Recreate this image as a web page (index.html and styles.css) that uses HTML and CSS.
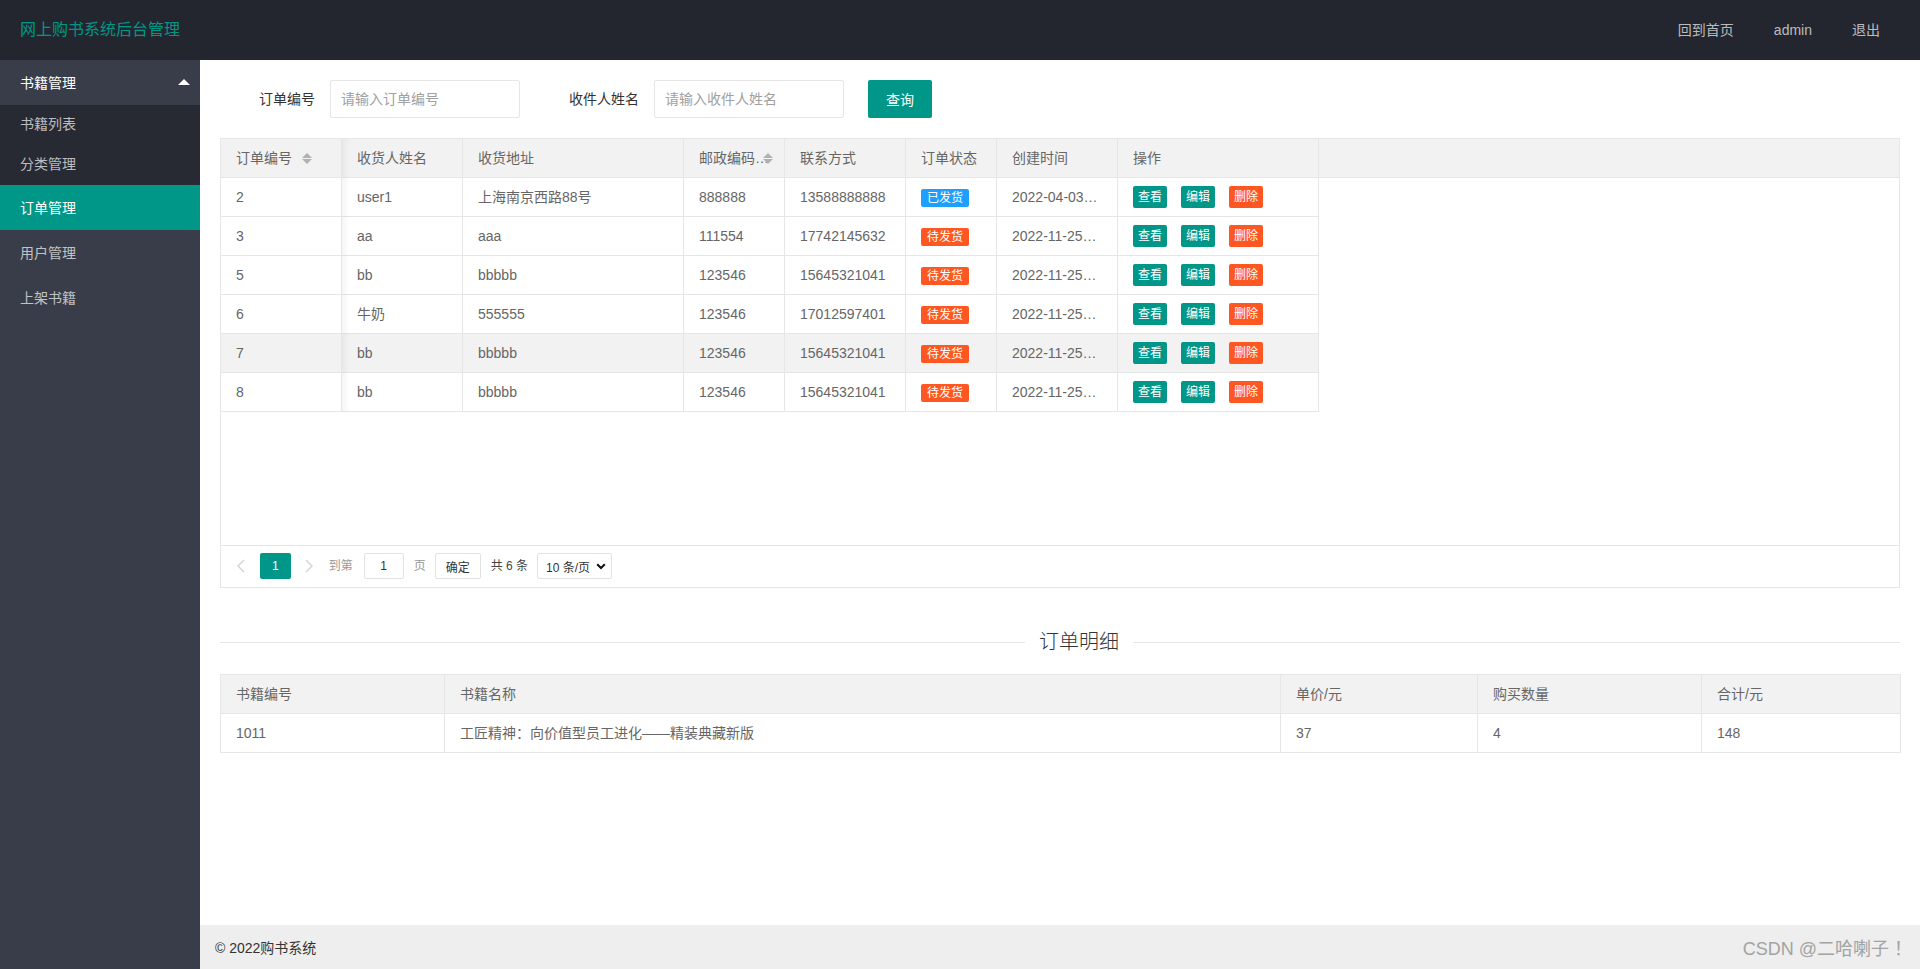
FILE: index.html
```html
<!DOCTYPE html>
<html lang="zh-CN">
<head>
<meta charset="utf-8">
<title>网上购书系统后台管理</title>
<link rel="stylesheet" href="styles.css">
</head>
<body>
<div class="layout">
  <header class="header">
    <div class="logo">网上购书系统后台管理</div>
    <nav class="topnav">
      <a class="topnav-item">回到首页</a>
      <a class="topnav-item">admin</a>
      <a class="topnav-item">退出</a>
    </nav>
  </header>
  <div class="frame">
    <aside class="side">
      <ul class="side-nav">
        <li>
          <a class="side-link side-link-open">书籍管理<span class="caret-up"></span></a>
          <ul class="side-child">
            <li><a class="side-sub">书籍列表</a></li>
            <li><a class="side-sub">分类管理</a></li>
          </ul>
        </li>
        <li><a class="side-link side-link-active">订单管理</a></li>
        <li><a class="side-link">用户管理</a></li>
        <li><a class="side-link">上架书籍</a></li>
      </ul>
    </aside>
    <div class="body">
      <main class="content">
        <form class="search">
          <label class="search-label">订单编号</label>
          <input class="search-input" type="text" placeholder="请输入订单编号">
          <label class="search-label">收件人姓名</label>
          <input class="search-input" type="text" placeholder="请输入收件人姓名">
          <button class="btn" type="button">查询</button>
        </form>

        <div class="tview">
          <div class="tview-main">
            <div class="tview-head">
              <table class="grid">
                <thead>
                  <tr>
                    <th class="col-fixed"><div class="cell w-id">订单编号<i class="sort"></i></div></th>
                    <th><div class="cell w-name">收货人姓名</div></th>
                    <th><div class="cell w-addr">收货地址</div></th>
                    <th><div class="cell w-zip">邮政编码<span class="dots">..</span><i class="sort sort-tight"></i></div></th>
                    <th><div class="cell w-tel">联系方式</div></th>
                    <th><div class="cell w-state">订单状态</div></th>
                    <th><div class="cell w-time">创建时间</div></th>
                    <th><div class="cell w-op">操作</div></th>
                  </tr>
                </thead>
              </table>
            </div>
            <table class="grid grid-body">
              <tbody>
                <tr>
                  <td class="col-fixed"><div class="cell w-id">2</div></td>
                  <td><div class="cell w-name">user1</div></td>
                  <td><div class="cell w-addr">上海南京西路88号</div></td>
                  <td><div class="cell w-zip">888888</div></td>
                  <td><div class="cell w-tel">13588888888</div></td>
                  <td><div class="cell w-state"><span class="badge badge-blue">已发货</span></div></td>
                  <td><div class="cell w-time">2022-04-03…</div></td>
                  <td><div class="cell w-op ops"><a class="btn-xs">查看</a><a class="btn-xs">编辑</a><a class="btn-xs btn-danger">删除</a></div></td>
                </tr>
                <tr>
                  <td class="col-fixed"><div class="cell w-id">3</div></td>
                  <td><div class="cell w-name">aa</div></td>
                  <td><div class="cell w-addr">aaa</div></td>
                  <td><div class="cell w-zip">111554</div></td>
                  <td><div class="cell w-tel">17742145632</div></td>
                  <td><div class="cell w-state"><span class="badge badge-orange">待发货</span></div></td>
                  <td><div class="cell w-time">2022-11-25…</div></td>
                  <td><div class="cell w-op ops"><a class="btn-xs">查看</a><a class="btn-xs">编辑</a><a class="btn-xs btn-danger">删除</a></div></td>
                </tr>
                <tr>
                  <td class="col-fixed"><div class="cell w-id">5</div></td>
                  <td><div class="cell w-name">bb</div></td>
                  <td><div class="cell w-addr">bbbbb</div></td>
                  <td><div class="cell w-zip">123546</div></td>
                  <td><div class="cell w-tel">15645321041</div></td>
                  <td><div class="cell w-state"><span class="badge badge-orange">待发货</span></div></td>
                  <td><div class="cell w-time">2022-11-25…</div></td>
                  <td><div class="cell w-op ops"><a class="btn-xs">查看</a><a class="btn-xs">编辑</a><a class="btn-xs btn-danger">删除</a></div></td>
                </tr>
                <tr>
                  <td class="col-fixed"><div class="cell w-id">6</div></td>
                  <td><div class="cell w-name">牛奶</div></td>
                  <td><div class="cell w-addr">555555</div></td>
                  <td><div class="cell w-zip">123546</div></td>
                  <td><div class="cell w-tel">17012597401</div></td>
                  <td><div class="cell w-state"><span class="badge badge-orange">待发货</span></div></td>
                  <td><div class="cell w-time">2022-11-25…</div></td>
                  <td><div class="cell w-op ops"><a class="btn-xs">查看</a><a class="btn-xs">编辑</a><a class="btn-xs btn-danger">删除</a></div></td>
                </tr>
                <tr class="is-hover">
                  <td class="col-fixed"><div class="cell w-id">7</div></td>
                  <td><div class="cell w-name">bb</div></td>
                  <td><div class="cell w-addr">bbbbb</div></td>
                  <td><div class="cell w-zip">123546</div></td>
                  <td><div class="cell w-tel">15645321041</div></td>
                  <td><div class="cell w-state"><span class="badge badge-orange">待发货</span></div></td>
                  <td><div class="cell w-time">2022-11-25…</div></td>
                  <td><div class="cell w-op ops"><a class="btn-xs">查看</a><a class="btn-xs">编辑</a><a class="btn-xs btn-danger">删除</a></div></td>
                </tr>
                <tr>
                  <td class="col-fixed"><div class="cell w-id">8</div></td>
                  <td><div class="cell w-name">bb</div></td>
                  <td><div class="cell w-addr">bbbbb</div></td>
                  <td><div class="cell w-zip">123546</div></td>
                  <td><div class="cell w-tel">15645321041</div></td>
                  <td><div class="cell w-state"><span class="badge badge-orange">待发货</span></div></td>
                  <td><div class="cell w-time">2022-11-25…</div></td>
                  <td><div class="cell w-op ops"><a class="btn-xs">查看</a><a class="btn-xs">编辑</a><a class="btn-xs btn-danger">删除</a></div></td>
                </tr>
              </tbody>
            </table>
          </div>
          <div class="tview-page">
            <span class="pg-arrow"><svg width="8" height="14" viewBox="0 0 8 14"><path d="M7 1 L1 7 L7 13" fill="none" stroke="#d2d2d2" stroke-width="1.4"/></svg></span>
            <span class="pg-curr">1</span>
            <span class="pg-arrow pg-next"><svg width="8" height="14" viewBox="0 0 8 14"><path d="M1 1 L7 7 L1 13" fill="none" stroke="#d2d2d2" stroke-width="1.4"/></svg></span>
            <span class="pg-skip">到第</span>
            <input class="pg-input" type="text" value="1">
            <span class="pg-unit">页</span>
            <button class="pg-btn" type="button">确定</button>
            <span class="pg-count">共 6 条</span>
            <span class="pg-limits"><span>10 条/页</span><svg width="10" height="7" viewBox="0 0 10 7"><path d="M1.2 1.2 L5 5 L8.8 1.2" fill="none" stroke="#111" stroke-width="2"/></svg></span>
          </div>
        </div>

        <div class="field-title">
          <span class="field-line field-line-left"></span>
          <span class="field-text">订单明细</span>
          <span class="field-line"></span>
        </div>

        <table class="dtable">
          <colgroup>
            <col class="dc-1"><col class="dc-2"><col class="dc-3"><col class="dc-4"><col class="dc-5">
          </colgroup>
          <thead>
            <tr><th>书籍编号</th><th>书籍名称</th><th>单价/元</th><th>购买数量</th><th>合计/元</th></tr>
          </thead>
          <tbody>
            <tr><td>1011</td><td>工匠精神：向价值型员工进化——精装典藏新版</td><td>37</td><td>4</td><td>148</td></tr>
          </tbody>
        </table>
      </main>
      <footer class="footer">
        <span>© 2022购书系统</span>
        <span class="watermark">CSDN @二哈喇子 ！</span>
      </footer>
    </div>
  </div>
</div>
</body>
</html>
```

FILE: styles.css
```css
* { box-sizing: border-box; }
html, body { margin: 0; height: 100%; overflow: hidden; }
body {
  font-family: "Liberation Sans", "Noto Sans CJK SC", sans-serif;
  font-size: 14px;
  color: #333;
  background: #fff;
}
ul { list-style: none; margin: 0; padding: 0; }
a { text-decoration: none; color: inherit; }

.layout { height: 100vh; display: flex; flex-direction: column; }

/* header */
.header {
  height: 60px; flex: none; background: #23262e;
  display: flex; align-items: center; justify-content: space-between;
}
.logo { width: 200px; text-align: center; color: #009688; font-size: 16px; line-height: 60px; }
.topnav { display: flex; padding: 0 20px; }
.topnav-item { padding: 0 20px; line-height: 60px; color: rgba(255,255,255,.7); }

/* frame */
.frame { flex: 1; display: flex; min-height: 0; }
.side { width: 200px; flex: none; background: #393d49; }
.side-link {
  display: flex; align-items: center; justify-content: space-between;
  height: 45px; padding: 0 10px 1px 20px; color: rgba(255,255,255,.7);
}
.side-link-open { color: #fff; }
.side-link-active { background: #009688; color: #fff; }
.caret-up {
  width: 0; height: 0;
  border-left: 6px solid transparent; border-right: 6px solid transparent;
  border-bottom: 6px solid #fff;
}
.side-child { background: rgba(0,0,0,.3); }
.side-sub { display: block; height: 40px; line-height: 39px; padding-left: 20px; color: rgba(255,255,255,.7); }

.body { flex: 1; display: flex; flex-direction: column; min-width: 0; }
.content { flex: 1; padding: 20px 20px 0; overflow: hidden; }

/* search */
.search { display: flex; align-items: center; margin: 0 0 20px; }
.search-label { width: 110px; padding: 0 15px; text-align: right; color: #333; line-height: 20px; }
.search-input {
  width: 190px; height: 38px; border: 1px solid #e6e6e6; border-radius: 2px;
  padding: 0 10px; font: inherit; color: #333; margin: 0 24px 0 0; outline: none; background: #fff;
}
.search-input::placeholder { color: #a0a0a0; }
.btn {
  height: 38px; padding: 0 18px; border: 0; border-radius: 2px;
  background: #009688; color: #fff; font: inherit; cursor: pointer;
}

/* table view */
.tview { height: 450px; border: 1px solid #e6e6e6; display: flex; flex-direction: column; }
.tview-main { flex: 1; }
.tview-head { background: #f2f2f2; border-bottom: 1px solid #e6e6e6; }
.grid { border-collapse: separate; border-spacing: 0; color: #666; }
.grid th, .grid td { padding: 0; border-right: 1px solid #e6e6e6; font-weight: 400; text-align: left; }
.grid-body td { border-bottom: 1px solid #e6e6e6; background: #fff; }
.grid-body tr.is-hover td { background: #f2f2f2; }
.grid .col-fixed { position: relative; }
.grid .col-fixed::after {
  content: ""; position: absolute; top: 0; bottom: -1px; right: -9px; width: 8px;
  background: linear-gradient(to right, rgba(0,0,0,.04), rgba(0,0,0,0));
  pointer-events: none;
}
.cell {
  height: 38px; line-height: 38px; padding: 0 15px;
  overflow: hidden; white-space: nowrap; text-overflow: ellipsis;
}
.w-id { width: 120px; }
.w-name { width: 120px; }
.w-addr { width: 220px; }
.w-zip { width: 100px; }
.w-tel { width: 120px; }
.w-state { width: 90px; }
.w-time { width: 120px; }
.w-op { width: 200px; }
.dots { letter-spacing: -1px; }

.sort { display: inline-block; position: relative; width: 10px; height: 20px; margin-left: 10px; vertical-align: middle; }
.sort-tight { margin-left: 2px; }
.sort::before, .sort::after {
  content: ""; position: absolute; left: 0; width: 0; height: 0;
  border: 5px solid transparent;
}
.sort::before { top: -1px; border-bottom-color: #b2b2b2; }
.sort::after { top: 10px; border-top-color: #b2b2b2; }

.badge {
  display: inline-block; height: 18px; line-height: 18px; padding: 0 6px;
  border-radius: 2px; color: #fff; font-size: 12px; vertical-align: middle;
}
.badge-blue { background: #1e9fff; }
.badge-orange { background: #ff5722; }

.ops { display: flex; align-items: center; gap: 14px; }
.btn-xs {
  display: inline-block; height: 22px; line-height: 22px; padding: 0 5px;
  border-radius: 2px; background: #009688; color: #fff; font-size: 12px;
}
.btn-danger { background: #ff5722; }

/* pager */
.tview-page {
  height: 42px; flex: none; border-top: 1px solid #e6e6e6; padding: 7px 7px 0;
  display: flex; align-items: flex-start; font-size: 12px; color: #333; white-space: nowrap;
}
.tview-page > * { height: 26px; }
.pg-arrow { padding: 0 9px; display: flex; align-items: center; }
.pg-curr {
  margin-left: 6px; padding: 0 12px; line-height: 26px;
  background: #009688; color: #fff; border-radius: 2px;
}
.pg-next { margin-left: 5px; }
.pg-skip { margin-left: 7px; color: #999; line-height: 26px; }
.pg-input {
  margin: 0 0 0 11px; width: 40px; border: 1px solid #e2e2e2; border-radius: 2px;
  text-align: center; font: inherit; color: #333; padding: 0 3px; outline: none;
}
.pg-unit { margin-left: 10px; color: #999; line-height: 26px; }
.pg-btn {
  margin: 0 0 0 9px; width: 46px; padding: 0; border: 1px solid #e2e2e2; border-radius: 2px;
  background: #fff; font: inherit; color: #333;
}
.pg-count { margin-left: 10px; line-height: 26px; color: #444; }
.pg-limits {
  margin-left: 9px; display: inline-flex; align-items: center; justify-content: space-between;
  width: 75px; border: 1px solid #e2e2e2; border-radius: 2px; padding: 0 5px 0 8px; color: #333;
}

/* detail */
.field-title { display: flex; align-items: center; height: 28px; margin: 40px 0 18px; }
.field-line { height: 1px; background: #e6e6e6; flex: 1; }
.field-line-left { flex: 0 0 805px; }
.field-text { padding: 0 14px; font-size: 20px; font-weight: 300; color: #333; line-height: 28px; }

.dtable { width: 100%; table-layout: fixed; border-collapse: collapse; color: #666; }
.dtable th, .dtable td {
  border: 1px solid #e6e6e6; padding: 9px 15px; line-height: 20px;
  text-align: left; font-weight: 400;
}
.dtable th { background: #f2f2f2; }
.dc-1 { width: 224px; }
.dc-2 { width: 836px; }
.dc-3 { width: 197px; }
.dc-4 { width: 224px; }
.dc-5 { width: 199px; }

/* footer */
.footer {
  height: 44px; flex: none; background: #eee;
  display: flex; align-items: center; justify-content: space-between;
  padding: 0 8px 0 15px; color: #333;
}
.watermark { font-size: 18px; color: #a3a3a3; font-family: "Liberation Sans", "Noto Sans CJK JP", sans-serif; }
```
